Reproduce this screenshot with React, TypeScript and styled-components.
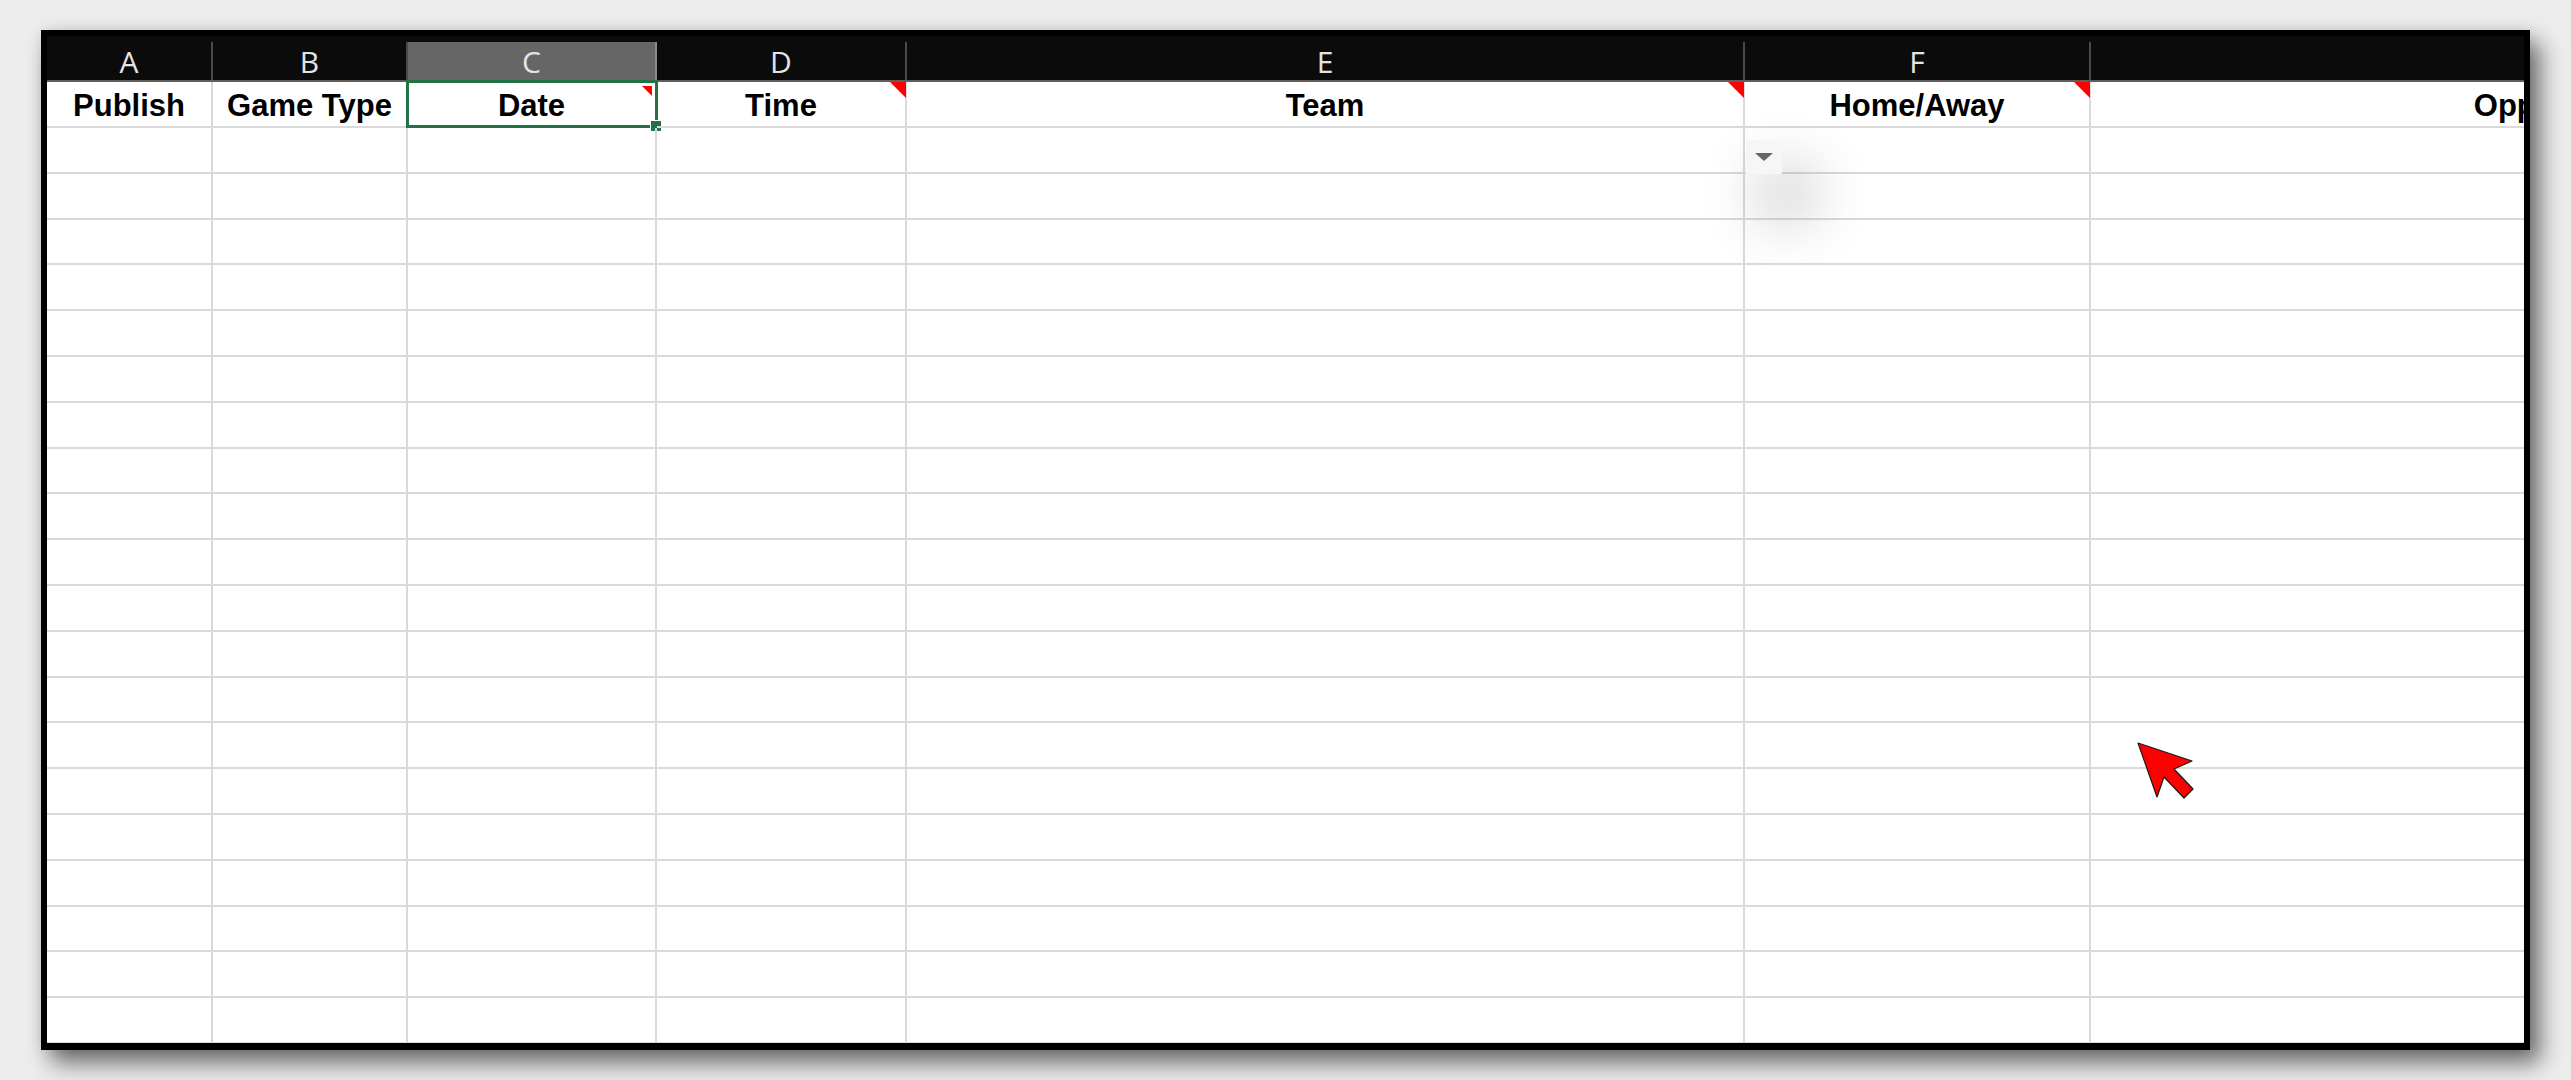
import React from 'react';
import styled, { createGlobalStyle } from 'styled-components';

const GlobalStyle = createGlobalStyle`
  html, body {
    margin: 0;
    padding: 0;
    background: #ededed;
  }
  body {
    width: 2571px;
    height: 1080px;
    overflow: hidden;
  }
`;

interface Column {
  letter: string;
  label: string;
  width: number;
  note?: 'big' | 'small';
}

const columns: Column[] = [
  { letter: 'A', label: 'Publish', width: 166 },
  { letter: 'B', label: 'Game Type', width: 195 },
  { letter: 'C', label: 'Date', width: 249, note: 'small' },
  { letter: 'D', label: 'Time', width: 250, note: 'big' },
  { letter: 'E', label: 'Team', width: 838, note: 'big' },
  { letter: 'F', label: 'Home/Away', width: 346, note: 'big' },
  { letter: 'G', label: 'Opponent', width: 914 },
];

const template = columns.map((c) => `${c.width}px`).join(' ');
const ROWS = 20;

const Page = styled.div`
  padding: 30px 0 0 41px;
`;

const Frame = styled.div`
  position: relative;
  box-sizing: border-box;
  width: 2489px;
  height: 1020px;
  border: 6px solid #000;
  border-bottom-width: 7px;
  background: #fff;
  overflow: hidden;
  box-shadow: 10px 13px 22px rgba(0, 0, 0, 0.55), 0 0 14px rgba(0, 0, 0, 0.08);
`;

const HeaderBar = styled.div`
  display: grid;
  grid-template-columns: ${template};
  background: #0b0b0b;
  padding-top: 6px;
  border-bottom: 2px solid #5e5e5e;
`;

const HeaderCell = styled.div<{ $selected?: boolean }>`
  height: 38px;
  box-sizing: border-box;
  display: flex;
  align-items: center;
  justify-content: center;
  border-right: 2px solid ${(p) => (p.$selected ? '#8a8a8a' : '#4a4a4a')};
  background: ${(p) => (p.$selected ? '#666666' : 'transparent')};
  color: #e4e4e4;
  font-family: 'Open Sans', 'Liberation Sans', sans-serif;
  font-size: 30px;
  line-height: 1;
  padding-top: 2px;
`;

const Row = styled.div<{ $h: number }>`
  display: grid;
  grid-template-columns: ${template};
  height: ${(p) => p.$h}px;
`;

const Cell = styled.div`
  position: relative;
  box-sizing: border-box;
  border-right: 2px solid #dadada;
  border-bottom: 2px solid #dadada;
`;

const LabelCell = styled(Cell)`
  display: flex;
  align-items: center;
  justify-content: center;
  padding-top: 3px;
  font-family: 'Liberation Sans', Arial, sans-serif;
  font-weight: bold;
  font-size: 31px;
  color: #000;
  white-space: nowrap;
`;

const Note = styled.span<{ $size: number; $top: number; $right: number }>`
  position: absolute;
  top: ${(p) => p.$top}px;
  right: ${(p) => p.$right}px;
  width: 0;
  height: 0;
  border-top: ${(p) => p.$size}px solid #ff0000;
  border-left: ${(p) => p.$size}px solid transparent;
`;

const Selection = styled.div`
  position: absolute;
  left: -2px;
  top: -2px;
  right: -3px;
  bottom: -2px;
  border: 3px solid #217346;
  pointer-events: none;
`;

const FillHandle = styled.span`
  position: absolute;
  right: -7px;
  bottom: -7px;
  width: 10px;
  height: 10px;
  background: #217346;
  border: 1px solid #fff;
`;

const DropButton = styled.div`
  position: absolute;
  left: 1px;
  top: 12px;
  width: 36px;
  height: 34px;
  background: #f4f6f8;
  display: flex;
  align-items: center;
  justify-content: center;
  box-shadow: 22px 36px 50px 18px rgba(0, 0, 0, 0.12);
  z-index: 2;
`;

const Pointer = styled.svg`
  position: absolute;
  left: 2090px;
  top: 706px;
  z-index: 3;
`;

const App = () => {
  return (
    <>
      <GlobalStyle />
      <Page>
        <Frame>
          <HeaderBar>
            {columns.map((c) => (
              <HeaderCell key={c.letter} $selected={c.letter === 'C'}>
                {c.letter === 'G' ? '' : c.letter}
              </HeaderCell>
            ))}
          </HeaderBar>
          <Row $h={46}>
            {columns.map((c) => (
              <LabelCell key={c.letter}>
                {c.label}
                {c.note === 'big' && <Note $size={16} $top={0} $right={-1} />}
                {c.note === 'small' && <Note $size={10} $top={4} $right={3} />}
                {c.letter === 'C' && (
                  <Selection>
                    <FillHandle />
                  </Selection>
                )}
              </LabelCell>
            ))}
          </Row>
          {Array.from({ length: ROWS }).map((_, r) => (
            <Row key={r} $h={45.8}>
              {columns.map((c) => (
                <Cell key={c.letter}>
                  {r === 0 && c.letter === 'F' && (
                    <DropButton>
                      <svg width="20" height="10" viewBox="0 0 20 10">
                        <polygon points="1,1 19,1 10,9" fill="#666" />
                      </svg>
                    </DropButton>
                  )}
                </Cell>
              ))}
            </Row>
          ))}
          <Pointer width="60" height="60" viewBox="0 0 60 60">
            <polygon
              points="1,1 55,19 37,27 56,47 47,56 27,35 20,55"
              fill="#ff0000"
              stroke="#1a1a1a"
              strokeWidth="1.2"
              strokeLinejoin="round"
            />
          </Pointer>
        </Frame>
      </Page>
    </>
  );
};

export default App;
